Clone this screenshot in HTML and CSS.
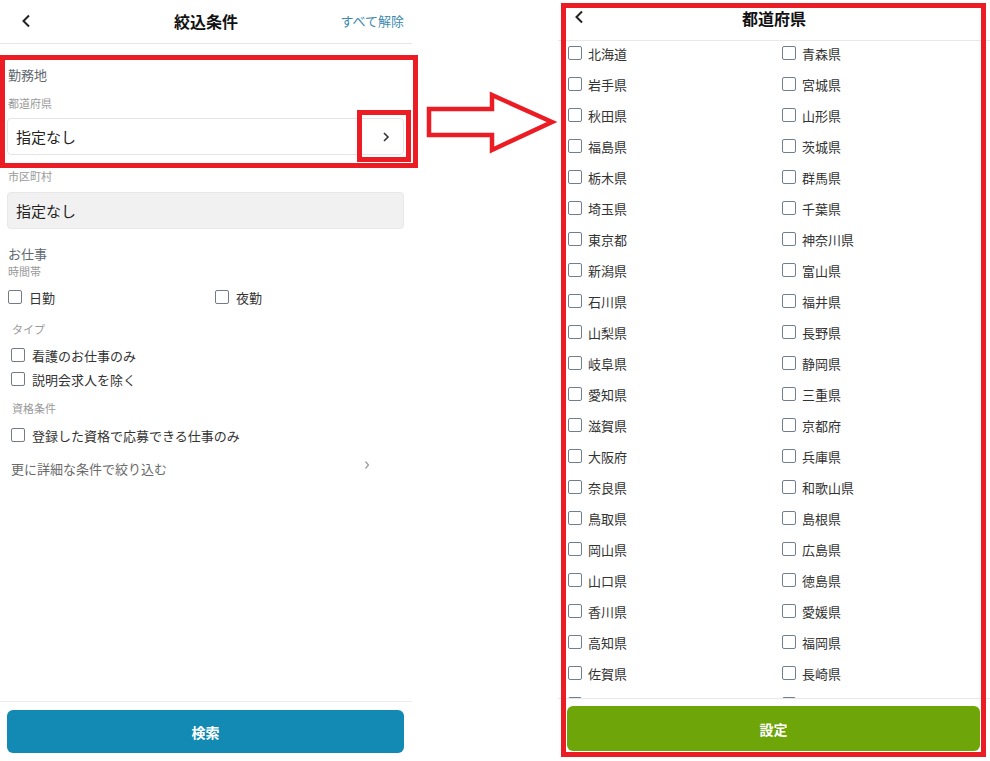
FILE: index.html
```html
<!DOCTYPE html>
<html lang="ja">
<head>
<meta charset="utf-8">
<title>絞込条件</title>
<link rel="stylesheet" href="styles.css">
</head>
<body>
<div class="stage">
  <section class="screen left">
    <header class="bar">
      <span class="back"><svg width="10" height="14" viewBox="0 0 10 14"><path d="M8 1.5 L2.5 7 L8 12.5" fill="none" stroke="#222" stroke-width="2"/></svg></span>
      <h1 class="title">絞込条件</h1>
      <a class="clear">すべて解除</a>
    </header>
    <div class="body">
      <div class="sec-title first">勤務地</div>
      <div class="label l-pref">都道府県</div>
      <div class="field">
        <span>指定なし</span>
        <svg class="chev" width="8" height="12" viewBox="0 0 8 12"><path d="M2 2 L6 6 L2 10" fill="none" stroke="#333" stroke-width="1.6"/></svg>
      </div>
      <div class="label l-city">市区町村</div>
      <div class="field disabled"><span>指定なし</span></div>
      <div class="sec-title job">お仕事</div>
      <div class="label l-time">時間帯</div>
      <div class="time-row">
        <label class="check"><span class="box"></span>日勤</label>
        <label class="check"><span class="box"></span>夜勤</label>
      </div>
      <div class="label sub l-type">タイプ</div>
      <label class="check sub r1"><span class="box"></span>看護のお仕事のみ</label>
      <label class="check sub r2"><span class="box"></span>説明会求人を除く</label>
      <div class="label sub l-qual">資格条件</div>
      <label class="check sub r3"><span class="box"></span>登録した資格で応募できる仕事のみ</label>
      <div class="more">
        <span>更に詳細な条件で絞り込む</span>
        <svg width="6" height="10" viewBox="0 0 6 10"><path d="M1.5 1.5 L4.5 5 L1.5 8.5" fill="none" stroke="#999" stroke-width="1.2"/></svg>
      </div>
    </div>
    <footer class="foot">
      <button class="btn blue">検索</button>
    </footer>
  </section>

  <div class="gap"></div>

  <section class="screen right">
    <header class="bar2">
      <span class="back2"><svg width="10" height="14" viewBox="0 0 10 14"><path d="M8 1.5 L2.5 7 L8 12.5" fill="none" stroke="#222" stroke-width="2"/></svg></span>
      <h1 class="title">都道府県</h1>
    </header>
    <div class="list">
      <label class="pref"><span class="box"></span>北海道</label>
      <label class="pref"><span class="box"></span>青森県</label>
      <label class="pref"><span class="box"></span>岩手県</label>
      <label class="pref"><span class="box"></span>宮城県</label>
      <label class="pref"><span class="box"></span>秋田県</label>
      <label class="pref"><span class="box"></span>山形県</label>
      <label class="pref"><span class="box"></span>福島県</label>
      <label class="pref"><span class="box"></span>茨城県</label>
      <label class="pref"><span class="box"></span>栃木県</label>
      <label class="pref"><span class="box"></span>群馬県</label>
      <label class="pref"><span class="box"></span>埼玉県</label>
      <label class="pref"><span class="box"></span>千葉県</label>
      <label class="pref"><span class="box"></span>東京都</label>
      <label class="pref"><span class="box"></span>神奈川県</label>
      <label class="pref"><span class="box"></span>新潟県</label>
      <label class="pref"><span class="box"></span>富山県</label>
      <label class="pref"><span class="box"></span>石川県</label>
      <label class="pref"><span class="box"></span>福井県</label>
      <label class="pref"><span class="box"></span>山梨県</label>
      <label class="pref"><span class="box"></span>長野県</label>
      <label class="pref"><span class="box"></span>岐阜県</label>
      <label class="pref"><span class="box"></span>静岡県</label>
      <label class="pref"><span class="box"></span>愛知県</label>
      <label class="pref"><span class="box"></span>三重県</label>
      <label class="pref"><span class="box"></span>滋賀県</label>
      <label class="pref"><span class="box"></span>京都府</label>
      <label class="pref"><span class="box"></span>大阪府</label>
      <label class="pref"><span class="box"></span>兵庫県</label>
      <label class="pref"><span class="box"></span>奈良県</label>
      <label class="pref"><span class="box"></span>和歌山県</label>
      <label class="pref"><span class="box"></span>鳥取県</label>
      <label class="pref"><span class="box"></span>島根県</label>
      <label class="pref"><span class="box"></span>岡山県</label>
      <label class="pref"><span class="box"></span>広島県</label>
      <label class="pref"><span class="box"></span>山口県</label>
      <label class="pref"><span class="box"></span>徳島県</label>
      <label class="pref"><span class="box"></span>香川県</label>
      <label class="pref"><span class="box"></span>愛媛県</label>
      <label class="pref"><span class="box"></span>高知県</label>
      <label class="pref"><span class="box"></span>福岡県</label>
      <label class="pref"><span class="box"></span>佐賀県</label>
      <label class="pref"><span class="box"></span>長崎県</label>
      <label class="pref"><span class="box"></span>熊本県</label>
      <label class="pref"><span class="box"></span>大分県</label>
    </div>
    <footer class="foot2">
      <button class="btn green">設定</button>
    </footer>
  </section>

  <div class="mark mark-area"></div>
  <div class="mark mark-chev"></div>
  <div class="mark mark-right"></div>
  <svg class="arrow" width="150" height="90" viewBox="415 80 150 90">
    <polygon points="429,109 492,109 492,95 552,122 492,150 492,135 429,135" fill="#fff" stroke="#ec1c24" stroke-width="4.5" stroke-linejoin="miter"/>
  </svg>
</div>
</body>
</html>
```

FILE: styles.css
```css
* { box-sizing: border-box; margin: 0; padding: 0; }

html, body {
  width: 990px;
  height: 761px;
  background: #fff;
  overflow: hidden;
}

body {
  font-family: "Noto Sans CJK JP", "Noto Sans", sans-serif;
  color: #333;
}

.stage {
  position: relative;
  display: flex;
  width: 990px;
  height: 761px;
}

.screen {
  display: flex;
  flex-direction: column;
  height: 761px;
  background: #fff;
}

.left { width: 412px; flex: 0 0 412px; }
.gap { flex: 0 0 146px; }
.right { width: 432px; flex: 0 0 432px; }

/* ---------- left header ---------- */
.bar {
  height: 44px;
  border-bottom: 1px solid #e6e6e6;
  display: grid;
  grid-template-columns: 1fr auto 1fr;
  align-items: center;
  padding: 0 8px 2px 8px;
}

.back { display: flex; align-items: center; margin-left: 13px; }

.title {
  font-size: 16px;
  font-weight: 700;
  color: #111;
  line-height: 20px;
}

.clear {
  justify-self: end;
  font-size: 13px;
  color: #3d89ae;
  line-height: 18px;
}

/* ---------- left body ---------- */
.body {
  display: flex;
  flex-direction: column;
  padding: 0 8px 0 7px;
}

.sec-title {
  font-size: 13px;
  line-height: 18px;
  color: #5f6770;
  padding-left: 1px;
}
.sec-title.first { margin-top: 22px; }
.sec-title.job { margin-top: 16px; }

.label {
  font-size: 11px;
  line-height: 16px;
  color: #9a9a9a;
  padding-left: 1px;
}
.l-pref { margin-top: 11px; }
.l-city { margin-top: 13px; }
.l-time { margin-top: 0; }
.l-type { margin-top: 14px; }
.l-qual { margin-top: 11px; }

.sub { margin-left: 4px; }

.field {
  height: 37px;
  border: 1px solid #e4e4e4;
  border-radius: 4px;
  display: flex;
  align-items: center;
  justify-content: space-between;
  padding: 0 13px 0 8px;
  font-size: 15px;
  color: #222;
  margin-top: 7px;
}
.field.disabled {
  background: #f1f1f1;
  border-color: #e8e8e8;
  margin-top: 8px;
}

.time-row {
  display: grid;
  grid-template-columns: 207px 1fr;
  margin-top: 8px;
  padding-left: 1px;
}

.check {
  display: flex;
  align-items: center;
  gap: 7px;
  height: 20px;
  font-size: 13px;
  color: #333;
}
.check.r1 { margin-top: 8px; }
.check.r2 { margin-top: 4px; }
.check.r3 { margin-top: 9px; }

.box {
  width: 14px;
  height: 14px;
  border: 1.5px solid #747b83;
  border-radius: 2px;
  background: #fff;
  flex: 0 0 14px;
}

.more {
  margin-top: 14px;
  margin-left: 4px;
  height: 18px;
  display: flex;
  align-items: center;
  justify-content: space-between;
  padding-right: 34px;
  font-size: 13px;
  color: #6a6a6a;
}
.more svg { margin-top: -6px; }

.foot {
  margin-top: auto;
  border-top: 1px solid #ececec;
  padding: 8px 8px 8px 7px;
}

.btn {
  width: 100%;
  height: 43px;
  border: none;
  border-radius: 6px;
  color: #fff;
  font-family: "Noto Sans CJK JP", sans-serif;
  font-size: 14px;
  font-weight: 700;
}
.btn.blue { background: #128ab3; }
.btn.green { background: #6ea509; height: 45px; }

/* ---------- right screen ---------- */
.bar2 {
  height: 41px;
  border-bottom: 1px solid #e8e8e8;
  display: grid;
  grid-template-columns: 1fr auto 1fr;
  align-items: center;
  padding: 0 0 4px 0;
}
.back2 { display: flex; align-items: center; margin: -2px 0 0 16px; }

.list {
  flex: 1;
  overflow: hidden;
  display: grid;
  grid-template-columns: 214px 1fr;
  grid-auto-rows: 31px;
  align-content: start;
  padding-left: 10px;
}

.pref {
  display: flex;
  align-items: center;
  gap: 6px;
  height: 20px;
  margin-top: 2px;
  font-size: 13px;
  color: #333;
}
.pref .box { border-color: #6f7f8f; }

.foot2 {
  border-top: 1px solid #e8e8e8;
  padding: 7px 10px 10px 9px;
  background: #fff;
}

/* ---------- annotations ---------- */
.mark {
  position: absolute;
  border: 5px solid #ec1c24;
  pointer-events: none;
}
.mark-area { left: 0; top: 55px; width: 418px; height: 113px; }
.mark-chev { left: 357px; top: 110px; width: 54px; height: 52px; }
.mark-right { left: 561px; top: 3px; width: 425px; height: 754px; }

.arrow {
  position: absolute;
  left: 415px;
  top: 80px;
}
```
